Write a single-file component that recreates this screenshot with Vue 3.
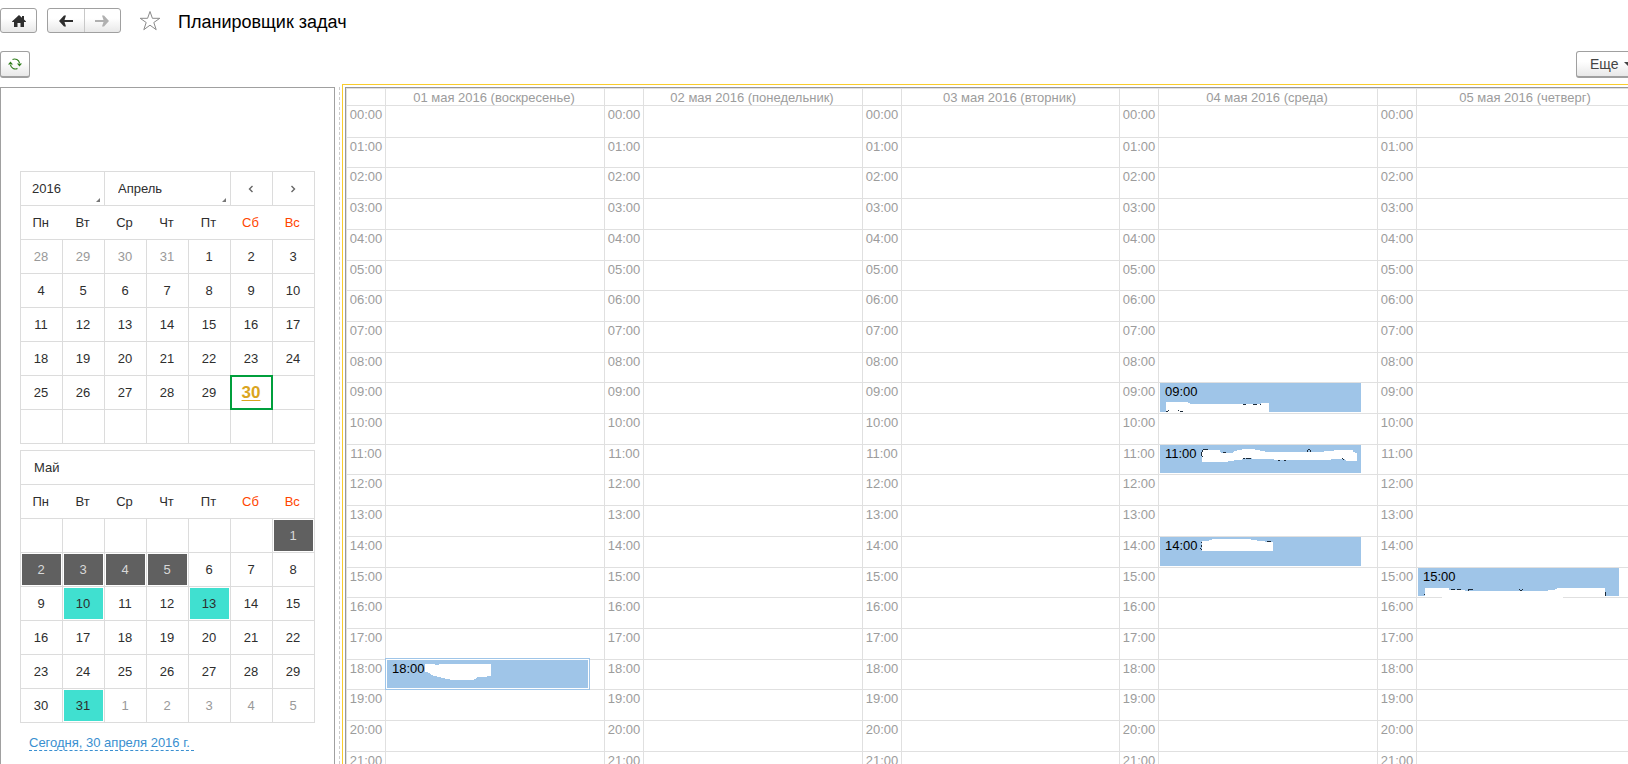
<script setup>
import { ref } from 'vue'

const year = ref('2016')
const month = ref('Апрель')
const weekdays = ['Пн', 'Вт', 'Ср', 'Чт', 'Пт', 'Сб', 'Вс']

// Builds week rows from a flat list of day descriptors.
const toWeeks = (cells) => Array.from({ length: 6 }, (_, w) => cells.slice(w * 7, w * 7 + 7))
const range = (from, to, kind = '') =>
  Array.from({ length: to - from + 1 }, (_, i) => ({ n: from + i, kind }))
const blank = (count) => Array.from({ length: count }, () => ({ n: '', kind: '' }))

const april = toWeeks([...range(28, 31, 'other'), ...range(1, 29), { n: 30, kind: 'today' }, ...blank(8)])
const busy = [10, 13, 31]
const may = toWeeks([
  ...blank(6),
  ...range(1, 31).map((d) => ({
    n: d.n,
    kind: d.n <= 5 ? 'selected' : busy.includes(d.n) ? 'busy' : ''
  })),
  ...range(1, 5, 'other')
])

const days = [
  '01 мая 2016 (воскресенье)',
  '02 мая 2016 (понедельник)',
  '03 мая 2016 (вторник)',
  '04 мая 2016 (среда)',
  '05 мая 2016 (четверг)'
]

// Hour lines fall on whole pixels, 30.7px apart on average; the first row is a pixel taller.
const HOUR = 30.7
const hours = Array.from({ length: 24 }, (_, h) => ({
  h,
  label: String(h).padStart(2, '0') + ':00',
  height: Math.round((h + 1) * HOUR) - Math.round(h * HOUR) + (h === 0 ? 1 : 0)
}))

const events = [
  {
    day: 0, hour: 18, active: true,
    mask: '114,12 141,12 147,16 156,16 156,12 312,12 312,47 299,50 272,51 267,55 259,59 191,60 186,57 169,55 154,50 139,48 129,40 114,34',
    marks: []
  },
  {
    day: 3, hour: 9,
    mask: '18,57 81,57 93,63 303,63 303,60 327,60 327,87 18,87',
    marks: [[18, 84, 6, 3], [24, 81, 3, 3], [54, 81, 3, 3], [60, 84, 9, 3], [249, 63, 9, 3], [279, 63, 12, 3], [300, 63, 3, 3]]
  },
  {
    day: 3, hour: 11,
    mask: '126,17 140,15 180,15 182,23 220,23 223,18 240,15 252,12 283,12 292,16 310,17 320,21 490,21 492,18 520,18 525,15 577,15 580,21 591,25 591,47 560,47 552,42 512,42 512,45 280,43 275,40 248,40 245,45 225,46 200,50 126,50',
    marks: [[129, 12, 15, 3], [126, 15, 3, 6], [123, 21, 3, 12], [126, 33, 3, 3], [189, 21, 9, 3], [249, 39, 6, 3], [258, 39, 15, 3], [354, 45, 6, 3], [372, 45, 6, 3], [444, 12, 6, 3], [441, 15, 3, 6], [450, 15, 3, 6], [546, 39, 3, 3], [549, 42, 3, 3]]
  },
  {
    day: 3, hour: 14,
    mask: '126,12 155,10 157,6 273,6 275,10 305,11 320,15 339,15 339,42 126,42',
    marks: [[123, 15, 3, 3], [123, 24, 3, 6], [120, 33, 3, 3], [123, 36, 3, 3], [321, 12, 12, 3]]
  },
  {
    day: 4, hour: 15,
    mask: '21,60 93,60 93,65 141,67 146,69 389,69 391,65 411,65 419,60 561,60 561,87 435,87 435,93 72,93 72,87 21,87',
    marks: [[18, 78, 3, 3], [99, 63, 12, 3], [117, 63, 12, 3], [150, 63, 15, 3], [150, 66, 3, 3], [303, 63, 3, 3], [306, 66, 6, 3], [312, 63, 3, 3], [561, 72, 3, 12]]
  }
]
const eventsAt = (day, hour) => events.filter((e) => e.day === day && e.hour === hour)
</script>

<template>
  <div class="page">
    <header class="titlebar">
      <button class="btn home" type="button" aria-label="Главная">
        <svg width="14" height="12" viewBox="0 0 14 12">
          <path d="M7 0 0 6.500V7H2v5h3.500V8h3v4H12V7h2V6.500L12 4.600V1H10v1.800z" fill="#2e2e2e" />
        </svg>
      </button>
      <div class="nav">
        <button type="button" aria-label="Назад">
          <svg width="14" height="12" viewBox="0 0 14 12">
            <path d="M0 6 5 0.500H7L5.500 5H14V7H5.500L7 11.500H5z" fill="#2e2e2e" />
          </svg>
        </button>
        <button type="button" aria-label="Вперед" disabled>
          <svg width="14" height="12" viewBox="0 0 14 12">
            <path d="M14 6 9 0.500H7L8.500 5H0V7H8.500L7 11.500H9z" fill="#b0b0b0" />
          </svg>
        </button>
      </div>
      <button class="star" type="button" aria-label="В избранное">
        <svg width="22" height="21" viewBox="0 0 22 21">
          <path d="M11 1.500 13.400 8.300H20.800L14.800 12.500 17.200 19.700 11 15.200 4.800 19.700 7.200 12.500 1.200 8.300H8.600z" fill="#fff" stroke="#8a8a8a" />
        </svg>
      </button>
      <h1>Планировщик задач</h1>
    </header>

    <div class="toolbar">
      <button class="btn refresh" type="button" aria-label="Обновить">
        <svg width="14" height="12" viewBox="0 0 14 12">
          <path d="M4.500 1.500A5 5 0 0 1 11.500 5M9.500 10.500A5 5 0 0 1 2.500 7" fill="none" stroke="#2f7d1b" stroke-width="1.200" />
          <path d="M9 5.500h5L11.500 8.500zM0 6.500h5L2.500 3.500z" fill="#2f7d1b" />
        </svg>
      </button>
      <button class="btn more" type="button">Еще<span class="caret"></span></button>
    </div>

    <main class="body">
      <aside class="side">
        <div class="picker">
          <div class="drop year">
            <select v-model="year" aria-label="Год"><option>2016</option></select>
          </div>
          <div class="drop month">
            <select v-model="month" aria-label="Месяц"><option>Апрель</option></select>
          </div>
          <button type="button" aria-label="Предыдущий месяц">
            <svg width="6" height="8" viewBox="0 0 6 8"><path d="M4.500 1 1.500 4 4.500 7" fill="none" stroke="#666" stroke-width="1.400" /></svg>
          </button>
          <button type="button" aria-label="Следующий месяц">
            <svg width="6" height="8" viewBox="0 0 6 8"><path d="M1.500 1 4.500 4 1.500 7" fill="none" stroke="#666" stroke-width="1.400" /></svg>
          </button>
        </div>
        <table class="cal">
          <thead>
            <tr><th v-for="(w, i) in weekdays" :key="w" :class="{ weekend: i > 4 }">{{ w }}</th></tr>
          </thead>
          <tbody>
            <tr v-for="(week, i) in april" :key="i">
              <td v-for="(d, j) in week" :key="j"><span class="day" :class="d.kind">{{ d.n }}</span></td>
            </tr>
          </tbody>
        </table>

        <div class="caption">Май</div>
        <table class="cal">
          <thead>
            <tr><th v-for="(w, i) in weekdays" :key="w" :class="{ weekend: i > 4 }">{{ w }}</th></tr>
          </thead>
          <tbody>
            <tr v-for="(week, i) in may" :key="i">
              <td v-for="(d, j) in week" :key="j"><span class="day" :class="d.kind">{{ d.n }}</span></td>
            </tr>
          </tbody>
        </table>
        <a class="now" href="#">Сегодня, 30 апреля 2016 г.</a>
      </aside>

      <div class="splitter"></div>

      <section class="board">
        <div class="frame">
          <table class="plan">
            <colgroup>
              <template v-for="(d, i) in days" :key="d">
                <col class="c-time" /><col class="c-day" :class="{ narrow: i === 2 }" />
              </template>
            </colgroup>
            <thead>
              <tr>
                <template v-for="d in days" :key="d"><td></td><th>{{ d }}</th></template>
              </tr>
            </thead>
            <tbody>
              <tr v-for="r in hours" :key="r.h" :style="{ height: r.height + 'px' }">
                <template v-for="(d, i) in days" :key="d">
                  <th>{{ r.label }}</th>
                  <td>
                    <div v-for="e in eventsAt(i, r.h)" :key="e.hour" class="event" :class="{ active: e.active }">
                      {{ r.label }}
                      <svg class="cover" width="201" height="29" viewBox="0 0 603 87">
                        <polygon :points="e.mask" fill="#fff" />
                        <rect v-for="(m, k) in e.marks" :key="k" :x="m[0]" :y="m[1]" :width="m[2]" :height="m[3]" fill="#1c2a38" />
                      </svg>
                    </div>
                  </td>
                </template>
              </tr>
            </tbody>
          </table>
        </div>
      </section>
    </main>
  </div>
</template>

<style>
body {
  margin: 0;
  overflow: hidden;
}
</style>

<style scoped>
.page {
  height: 100vh;
  display: flex;
  flex-direction: column;
  overflow: hidden;
  background: #fff;
  color: #2e2e2e;
  font: 13px/15px "Liberation Sans", Arial, sans-serif;
}
button,
select {
  font: inherit;
  color: inherit;
  padding: 0;
  margin: 0;
  border: 0;
  background: none;
}
button {
  display: flex;
  align-items: center;
  justify-content: center;
}
.titlebar {
  display: flex;
  align-items: center;
  height: 25px;
  padding-top: 8px;
}
.btn,
.nav {
  box-sizing: border-box;
  border: 1px solid #a0a0a0;
  border-radius: 3px;
  background: linear-gradient(#fff 40%, #e8e8e8);
}
.home {
  width: 37px;
  height: 25px;
}
.nav {
  display: flex;
  width: 74px;
  height: 25px;
  margin-left: 10px;
}
.nav button {
  flex: 1;
}
.nav button + button {
  border-left: 1px solid #c8c8c8;
}
.star {
  margin-left: 18px;
}
h1 {
  margin: 0 0 0 17px;
  padding-top: 2px;
  font-size: 18px;
  line-height: 22px;
  font-weight: 400;
  color: #000;
}
.toolbar {
  display: flex;
  justify-content: space-between;
  padding: 18px 0 6px;
  overflow: hidden;
}
.refresh {
  width: 30px;
  height: 27px;
  border-bottom-width: 2px;
}
.more {
  width: 66px;
  height: 27px;
  margin-right: -14px;
  border-bottom-width: 2px;
  justify-content: flex-start;
  padding-left: 13px;
  gap: 5px;
  font-size: 14px;
  color: #444;
}
.caret {
  border: 4px solid transparent;
  border-top-color: #444;
  border-bottom-width: 0;
}
.body {
  flex: 1;
  display: flex;
  min-height: 0;
}
.side {
  flex: none;
  box-sizing: border-box;
  width: 335px;
  margin-top: 3px;
  padding: 83px 19px 0;
  border: 1px solid #a0a0a0;
  border-bottom: 0;
}
.picker,
.caption {
  box-sizing: border-box;
  width: 295px;
  height: 35px;
  border: 1px solid #dcdcdc;
}
.picker {
  display: flex;
}
.picker > * + * {
  border-left: 1px solid #dcdcdc;
}
.picker > button {
  box-sizing: border-box;
  width: 42px;
  padding-right: 1px;
}
.drop {
  position: relative;
  box-sizing: border-box;
}
.year {
  width: 83px;
}
.month {
  width: 126px;
}
.drop select {
  appearance: none;
  width: 100%;
  height: 32px;
  padding-left: 13px;
}
.year select {
  padding-left: 11px;
}
.drop::after {
  content: "";
  position: absolute;
  right: 4px;
  bottom: 3px;
  border: 2px solid;
  border-color: transparent #777 #777 transparent;
}
.caption {
  margin-top: 6px;
  padding: 9px 13px;
}
.cal {
  width: 295px;
  table-layout: fixed;
  border-collapse: collapse;
  margin-top: -1px;
  border: 1px solid #dcdcdc;
}
.cal th,
.cal td {
  box-sizing: border-box;
  height: 34px;
  padding: 0;
  text-align: center;
  font-weight: 400;
}
.cal th {
  padding-right: 2px;
}
.cal td {
  border: 1px solid #dcdcdc;
}
.cal .weekend {
  color: #ff4500;
}
.day {
  display: block;
  margin: 1px;
  padding-right: 1px;
  line-height: 31px;
}
.other {
  color: #999;
}
.selected {
  background: #606060;
  color: #d8d8d8;
}
.busy {
  background: #40e0d0;
}
.today {
  position: relative;
  margin: -1px;
  border: 2px solid #009f3c;
  font-size: 17px;
  font-weight: 700;
  color: #daa520;
  text-decoration: underline;
  text-decoration-thickness: 1px;
  text-underline-offset: 2px;
}
.now {
  display: inline-block;
  margin: 12px 0 0 9px;
  padding-right: 4px;
  border-bottom: 1px dashed #3a8fd0;
  color: #3a8fd0;
  text-decoration: none;
}
.splitter {
  flex: none;
  width: 2px;
  margin: 3px 0 0 4px;
  border-left: 1px dashed #ccc;
}
.board {
  flex: 1;
  min-width: 0;
  overflow: hidden;
  padding: 2px 0 0 2px;
  border: solid #f9cc2c;
  border-width: 1px 0 0 1px;
}
.frame {
  height: 100%;
  border: solid #989898;
  border-width: 1px 0 0 1px;
}
.plan {
  width: 1290px;
  table-layout: fixed;
  border-spacing: 0;
  border: solid #e0e0e0;
  border-width: 1px 0 0 1px;
  color: #9c9c9c;
}
.c-time {
  width: 39px;
}
.c-day {
  width: 219px;
}
.c-day.narrow {
  width: 218px;
}
.plan th,
.plan td {
  box-sizing: border-box;
  padding: 0;
  border: solid #e0e0e0;
  border-width: 0 1px 1px 0;
  font-weight: 400;
  vertical-align: top;
}
.plan thead th {
  height: 17px;
  padding: 1px 2px 0 0;
}
.plan tbody th {
  padding-top: 1px;
}
.plan tbody td {
  position: relative;
}
.event {
  position: absolute;
  top: 0;
  left: 1px;
  bottom: 1px;
  box-sizing: border-box;
  width: 201px;
  padding: 1px 5px;
  background: #9fc5e8;
  color: #000;
}
.event.active {
  outline: 1px solid #9fc5e8;
  outline-offset: 1px;
  box-shadow: 0 0 0 1px #fff;
}
.cover {
  position: absolute;
  top: 0;
  left: 0;
  overflow: visible;
  shape-rendering: crispEdges;
}
</style>
